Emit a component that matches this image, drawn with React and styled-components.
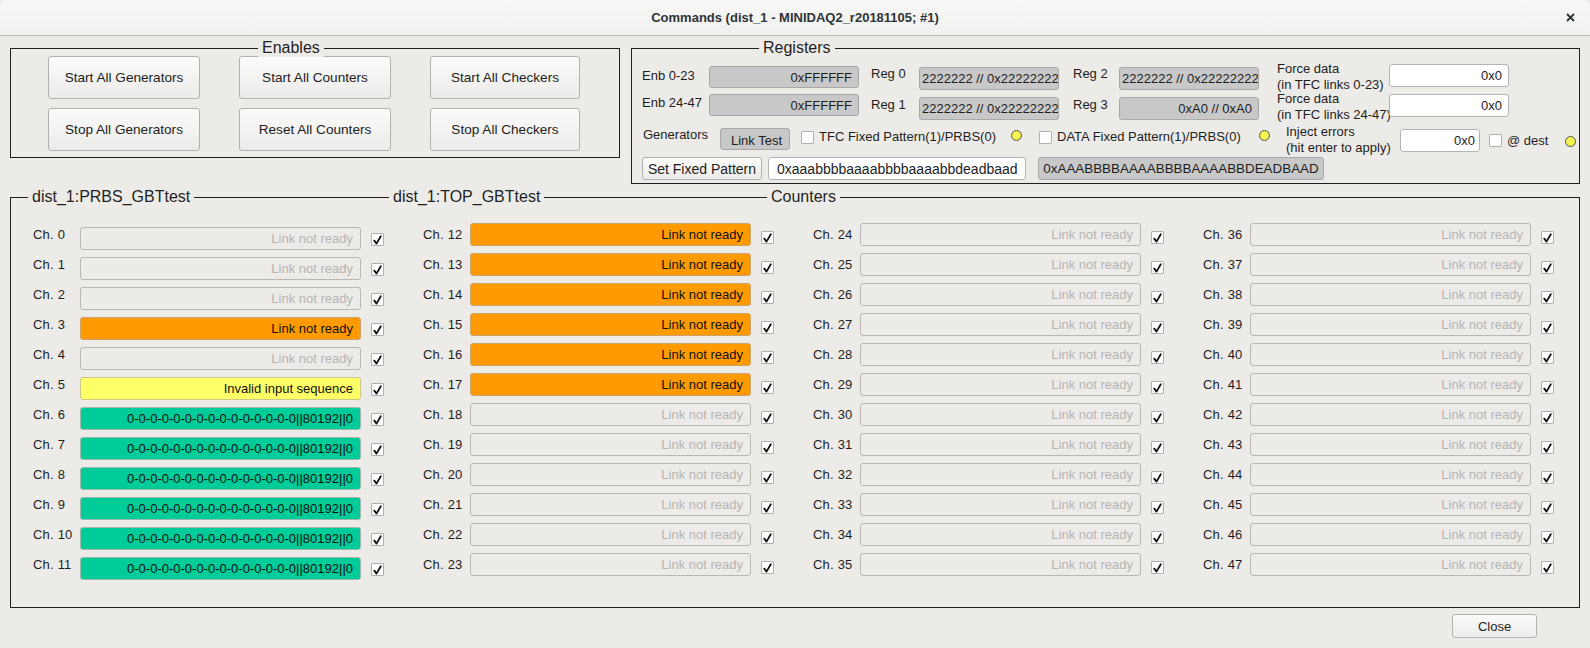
import React from "react";
import styled, { createGlobalStyle } from "styled-components";

const BG = "#edebe8";
const FONT = `"Liberation Sans", Arial, sans-serif`;

const GlobalStyle = createGlobalStyle`
  *, *::before, *::after { box-sizing: border-box; }
  html, body { margin: 0; padding: 0; background: ${BG}; }
  body { font-family: ${FONT}; font-size: 13px; color: #1d1d1d; }
`;

const Window = styled.div`
  width: 1590px;
  height: 648px;
  overflow: hidden;
  background: ${BG};
  display: flex;
  flex-direction: column;
`;

const TitleBar = styled.header`
  flex: none;
  height: 36px;
  display: grid;
  grid-template-columns: 1fr auto 1fr;
  align-items: center;
  background: linear-gradient(to bottom, #f7f7f6, #f1f1f0);
  border-bottom: 1px solid #bdbab5;
  border-radius: 7px 7px 0 0;
`;

const TitleText = styled.h1`
  grid-column: 2;
  margin: 0;
  font: bold 13px ${FONT};
  color: #2e3436;
`;

const CloseIcon = styled.span`
  grid-column: 3;
  justify-self: end;
  margin-right: 15px;
  display: flex;
`;

const Body = styled.main`
  flex: 1;
  padding: 12px 10px 0;
  display: flex;
  flex-direction: column;
`;

const TopRow = styled.div`
  display: flex;
  gap: 11px;
  align-items: flex-start;
`;

const GroupBox = styled.section`
  position: relative;
  flex: none;
  width: ${(p) => p.$w}px;
  height: ${(p) => p.$h}px;
  margin-top: ${(p) => p.$mt || 0}px;
  border: 1px solid #1f1f1f;
`;

const Legend = styled.span`
  position: absolute;
  top: -10px;
  left: ${(p) => p.$left}px;
  padding: 0 4px;
  background: ${BG};
  font-size: 16px;
  line-height: 18px;
  color: #1f1f1f;
  white-space: nowrap;
`;

/* ---------- Enables ---------- */
const EnableGrid = styled.div`
  display: grid;
  grid-template-columns: 152px 152px 150px;
  grid-template-rows: 43px 43px;
  column-gap: 39px;
  row-gap: 9px;
  padding: 7px 0 0 37px;
`;

const PushButton = styled.button`
  width: ${(p) => (p.$w ? `${p.$w}px` : "100%")};
  height: ${(p) => (p.$h ? `${p.$h}px` : "100%")};
  margin: 0;
  padding: 0;
  font-family: ${FONT};
  font-size: ${(p) => p.$fs || 13}px;
  color: #1d1d1d;
  background: linear-gradient(to bottom, #fbfbfa, #ecebe9);
  border: 1px solid #b3b1ad;
  border-radius: 3px;
  white-space: nowrap;
`;

/* ---------- Registers ---------- */
const RegBody = styled.div`
  display: flex;
  flex-direction: column;
  padding: 15px 0 0 10px;
`;

const RegGrid = styled.div`
  display: grid;
  grid-template-columns: 67px 150px 60px 140px 60px 140px 130px 120px;
  grid-auto-rows: 26px;
  row-gap: 4px;
`;

const RegLabel = styled.span`
  align-self: start;
  margin-top: ${(p) => p.$mt ?? 2}px;
  padding-left: ${(p) => p.$pl || 0}px;
  line-height: 16px;
  white-space: nowrap;
`;

const ValueBox = styled.div`
  flex: none;
  width: ${(p) => (p.$w ? `${p.$w}px` : "auto")};
  height: ${(p) => p.$h || 23}px;
  align-self: ${(p) => p.$align || "start"};
  margin-left: ${(p) => p.$ml || 0}px;
  margin-top: ${(p) => p.$mt || 0}px;
  display: flex;
  align-items: center;
  justify-content: ${(p) => p.$justify || "flex-end"};
  padding: 0 ${(p) => p.$px ?? 6}px;
  background: ${(p) => (p.$white ? "#ffffff" : "#c8c8c8")};
  border: 1px solid ${(p) => (p.$white ? "#b4b4b4" : "#a8a8a8")};
  border-radius: 3px;
  overflow: hidden;
  white-space: nowrap;
  font-size: ${(p) => p.$fs || 13}px;
  color: #1d1d1d;
`;

const RegLine = styled.div`
  display: flex;
  align-items: flex-start;
  height: ${(p) => p.$h}px;
  margin-top: ${(p) => p.$mt}px;
`;

const InlineText = styled.span`
  flex: none;
  width: ${(p) => (p.$w ? `${p.$w}px` : "auto")};
  margin-left: ${(p) => p.$ml || 0}px;
  margin-top: ${(p) => p.$mt || 0}px;
  line-height: 16px;
  white-space: nowrap;
`;

const GrayButton = styled.button`
  flex: none;
  width: 70px;
  height: 22px;
  margin: 1px 0 0 0;
  padding: 3px 0 0 10px;
  font: 13px ${FONT};
  color: #1d1d1d;
  text-align: left;
  background: #c8c8c8;
  border: 1px solid #a8a8a8;
  border-radius: 3px;
`;

const Led = styled.span`
  flex: none;
  width: 11px;
  height: 11px;
  margin-left: ${(p) => p.$ml || 0}px;
  margin-top: ${(p) => p.$mt || 0}px;
  border-radius: 50%;
  background: #f4f453;
  border: 1px solid #55554a;
`;

const Tick = styled.span`
  flex: none;
  width: 13px;
  height: 13px;
  margin-left: ${(p) => p.$ml || 0}px;
  margin-top: ${(p) => p.$mt || 0}px;
  display: flex;
  align-items: center;
  justify-content: center;
  background: #ffffff;
  border: 1px solid #b2b0ac;
  border-radius: 1px;
`;

/* ---------- Counters ---------- */
const CounterGrid = styled.div`
  display: grid;
  grid-template-columns: repeat(4, 351px);
  column-gap: 39px;
  padding: 25px 0 0 22px;
`;

const ChannelColumn = styled.div`
  display: flex;
  flex-direction: column;
  gap: 7px;
`;

const ChannelRow = styled.div`
  display: grid;
  grid-template-columns: 47px 281px 23px;
  height: 23px;
  align-items: start;
`;

const ChLabel = styled.span`
  line-height: 23px;
  white-space: nowrap;
  letter-spacing: 0.2px;
`;

const STATUS = {
  idle: { bg: "transparent", border: "#b9b7b3", color: "#b5b5b3" },
  warn: { bg: "#ff9a00", border: "#c9a56b", color: "#111111" },
  bad: { bg: "#ffff66", border: "#c9c98a", color: "#111111" },
  ok: { bg: "#00cc99", border: "#9fb8ae", color: "#111111" },
};

const StatusBox = styled.div`
  height: 23px;
  margin-top: ${(p) => p.$shift}px;
  padding-right: 7px;
  line-height: 21px;
  text-align: right;
  white-space: nowrap;
  overflow: hidden;
  border-radius: 3px;
  background: ${(p) => STATUS[p.$kind].bg};
  border: 1px solid ${(p) => STATUS[p.$kind].border};
  color: ${(p) => STATUS[p.$kind].color};
`;

const Footer = styled.footer`
  display: flex;
  justify-content: flex-end;
  padding: 6px 43px 0 0;
`;

/* ---------- data ---------- */
const OKTEXT = "0-0-0-0-0-0-0-0-0-0-0-0-0-0-0||80192||0";

const channelState = (n) => {
  if (n === 3) return ["warn", "Link not ready"];
  if (n === 5) return ["bad", "Invalid input sequence"];
  if (n >= 6 && n <= 11) return ["ok", OKTEXT];
  if (n >= 12 && n <= 17) return ["warn", "Link not ready"];
  return ["idle", "Link not ready"];
};

const CheckMark = () => (
  <svg width="9" height="10" viewBox="0 0 9 10">
    <path
      d="M1.3 5.6 L3.5 8.6 L7.8 1.2"
      fill="none"
      stroke="#111"
      strokeWidth="1.8"
      strokeLinecap="round"
      strokeLinejoin="round"
    />
  </svg>
);

const Channel = ({ n, shift }) => {
  const [kind, text] = channelState(n);
  return (
    <ChannelRow>
      <ChLabel>Ch. {n}</ChLabel>
      <StatusBox $kind={kind} $shift={shift}>
        {text}
      </StatusBox>
      <Tick $ml={10} $mt={8 + shift / 2}>
        <CheckMark />
      </Tick>
    </ChannelRow>
  );
};

export default function App() {
  const columns = [0, 1, 2, 3];
  return (
    <>
      <GlobalStyle />
      <Window>
        <TitleBar>
          <TitleText>Commands (dist_1 - MINIDAQ2_r20181105; #1)</TitleText>
          <CloseIcon>
            <svg width="9" height="9" viewBox="0 0 9 9">
              <path d="M1 1 L8 8 M8 1 L1 8" stroke="#2e3436" strokeWidth="1.8" />
            </svg>
          </CloseIcon>
        </TitleBar>

        <Body>
          <TopRow>
            <GroupBox $w={610} $h={110}>
              <Legend $left={247}>Enables</Legend>
              <EnableGrid>
                <PushButton $fs={13.6}>Start All Generators</PushButton>
                <PushButton $fs={13.6}>Start All Counters</PushButton>
                <PushButton $fs={13.6}>Start All Checkers</PushButton>
                <PushButton $fs={13.6}>Stop All Generators</PushButton>
                <PushButton $fs={13.6}>Reset All Counters</PushButton>
                <PushButton $fs={13.6}>Stop All Checkers</PushButton>
              </EnableGrid>
            </GroupBox>

            <GroupBox $w={949} $h={136}>
              <Legend $left={127}>Registers</Legend>
              <RegBody>
                <RegGrid>
                  <RegLabel $mt={4}>Enb 0-23</RegLabel>
                  <ValueBox $h={22} $mt={2}>0xFFFFFF</ValueBox>
                  <RegLabel $pl={12}>Reg 0</RegLabel>
                  <ValueBox $align="end" $justify="flex-start" $px={2}>
                    2222222 // 0x22222222
                  </ValueBox>
                  <RegLabel $pl={14}>Reg 2</RegLabel>
                  <ValueBox $align="end" $justify="flex-start" $px={2}>
                    2222222 // 0x22222222
                  </ValueBox>
                  <RegLabel $pl={18} $mt={-3}>
                    Force data
                    <br />
                    (in TFC links 0-23)
                  </RegLabel>
                  <ValueBox $white>0x0</ValueBox>

                  <RegLabel $mt={1}>Enb 24-47</RegLabel>
                  <ValueBox $h={22}>0xFFFFFF</ValueBox>
                  <RegLabel $pl={12} $mt={3}>Reg 1</RegLabel>
                  <ValueBox $align="end" $justify="flex-start" $px={2}>
                    2222222 // 0x22222222
                  </ValueBox>
                  <RegLabel $pl={14} $mt={3}>Reg 3</RegLabel>
                  <ValueBox $align="end">0xA0 // 0xA0</ValueBox>
                  <RegLabel $pl={18} $mt={-3}>
                    Force data
                    <br />
                    (in TFC links 24-47)
                  </RegLabel>
                  <ValueBox $white>0x0</ValueBox>
                </RegGrid>

                <RegLine $h={25} $mt={7}>
                  <InlineText $w={77} $ml={1}>Generators</InlineText>
                  <GrayButton>Link Test</GrayButton>
                  <Tick $ml={11} $mt={4} />
                  <InlineText $w={192} $ml={5} $mt={2}>
                    TFC Fixed Pattern(1)/PRBS(0)
                  </InlineText>
                  <Led $mt={3} />
                  <Tick $ml={17} $mt={4} />
                  <InlineText $w={202} $ml={5} $mt={2}>
                    DATA Fixed Pattern(1)/PRBS(0)
                  </InlineText>
                  <Led $mt={3} />
                  <InlineText $w={114} $ml={16} $mt={-3}>
                    Inject errors
                    <br />
                    (hit enter to apply)
                  </InlineText>
                  <ValueBox $white $w={80} $mt={2} $px={4}>
                    0x0
                  </ValueBox>
                  <Tick $ml={9} $mt={7} />
                  <InlineText $w={58} $ml={5} $mt={6}>
                    @ dest
                  </InlineText>
                  <Led $mt={9} />
                </RegLine>

                <RegLine $h={23} $mt={5}>
                  <PushButton $w={120} $h={23} $fs={14}>
                    Set Fixed Pattern
                  </PushButton>
                  <ValueBox $white $w={258} $ml={6} $justify="flex-start" $px={8} $fs={14}>
                    0xaaabbbbaaaabbbbaaaabbdeadbaad
                  </ValueBox>
                  <ValueBox $w={286} $ml={12} $justify="center" $px={2} $fs={13.4}>
                    0xAAABBBBAAAABBBBAAAABBDEADBAAD
                  </ValueBox>
                </RegLine>
              </RegBody>
            </GroupBox>
          </TopRow>

          <GroupBox $w={1570} $h={411} $mt={13}>
            <Legend $left={17}>dist_1:PRBS_GBTtest</Legend>
            <Legend $left={378}>dist_1:TOP_GBTtest</Legend>
            <Legend $left={756}>Counters</Legend>
            <CounterGrid>
              {columns.map((c) => (
                <ChannelColumn key={c}>
                  {Array.from({ length: 12 }, (_, i) => (
                    <Channel key={i} n={c * 12 + i} shift={c === 0 ? 4 : 0} />
                  ))}
                </ChannelColumn>
              ))}
            </CounterGrid>
          </GroupBox>

          <Footer>
            <PushButton $w={85} $h={24} $fs={13}>
              Close
            </PushButton>
          </Footer>
        </Body>
      </Window>
    </>
  );
}
